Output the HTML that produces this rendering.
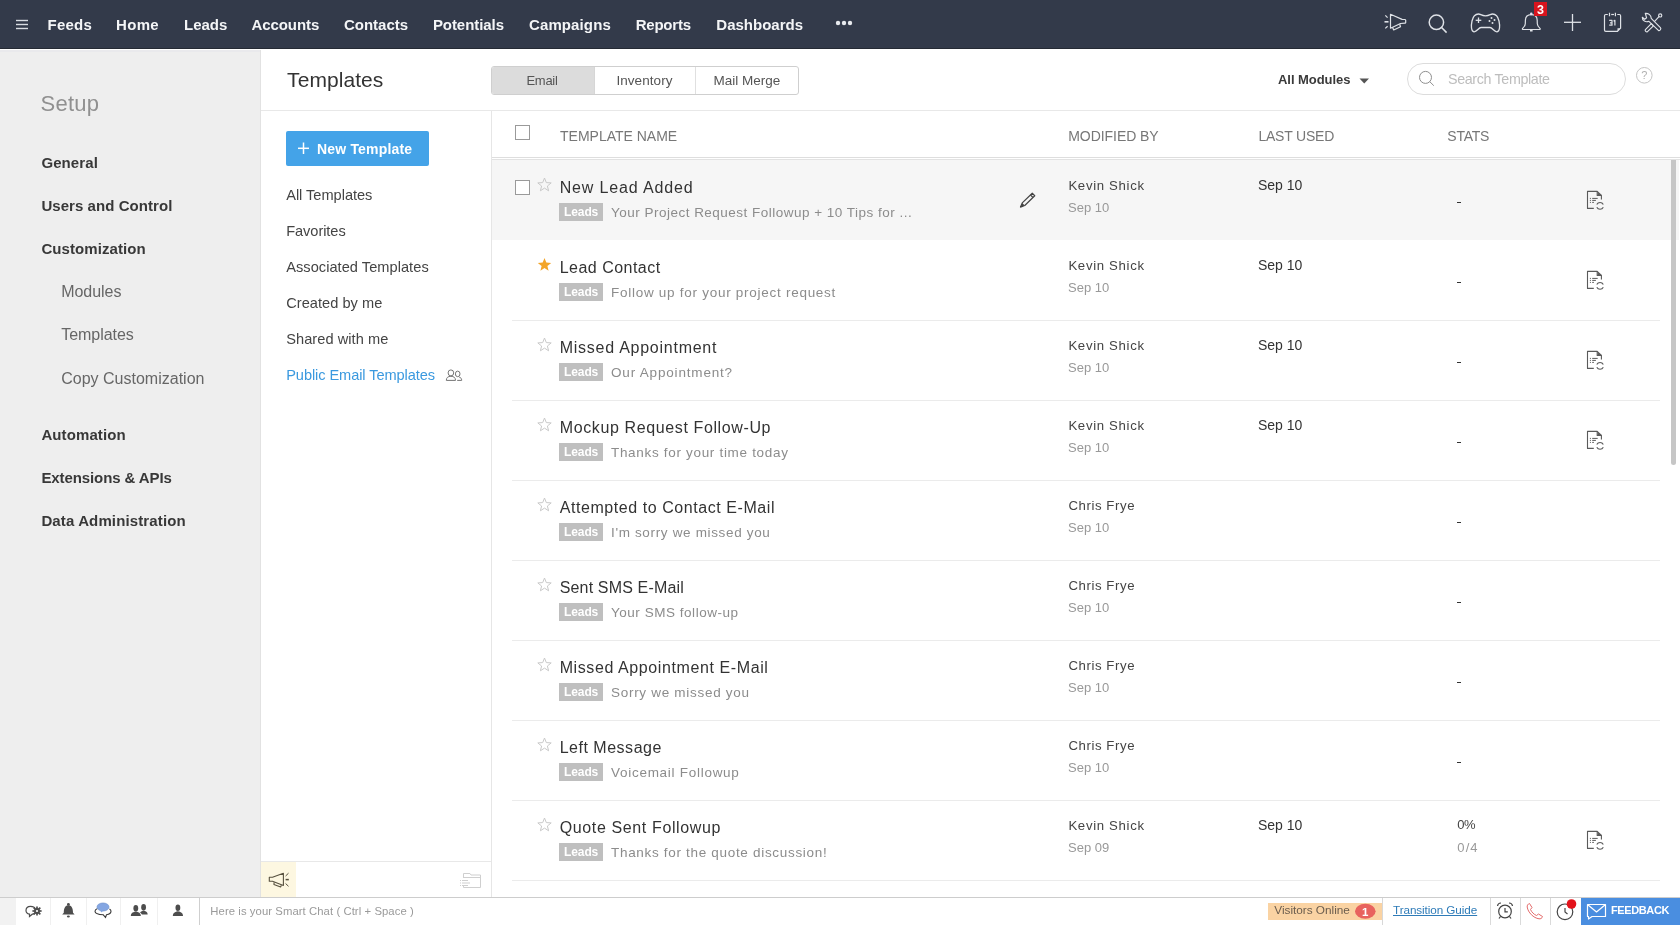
<!DOCTYPE html>
<html><head><meta charset="utf-8"><title>Templates</title>
<style>
html,body{margin:0;padding:0;width:1680px;height:925px;overflow:hidden;background:#fff;font-family:"Liberation Sans",sans-serif;}
.a{position:absolute;display:block;}
.t{position:absolute;white-space:nowrap;}
svg.a{overflow:visible}
#root{position:absolute;left:0;top:0;width:1680px;height:925px;overflow:hidden;will-change:transform;}
</style></head><body>
<div id="root">
<div class="a" style="left:0px;top:0px;width:1680px;height:48px;background:#333a4a"></div>
<div class="a" style="left:0px;top:48px;width:1680px;height:1px;background:#252a34"></div>
<svg class="a" style="left:15px;top:18px" width="14" height="13"><g stroke="#d9dce2" stroke-width="1.4"><line x1="1" y1="2.5" x2="13" y2="2.5"/><line x1="1" y1="6.5" x2="13" y2="6.5"/><line x1="1" y1="10.5" x2="13" y2="10.5"/></g></svg>
<div class="t" style="left:47.6px;top:15px;font-size:15px;line-height:19px;color:#f4f5f7;font-weight:bold;letter-spacing:0.2px">Feeds</div>
<div class="t" style="left:116px;top:15px;font-size:15px;line-height:19px;color:#f4f5f7;font-weight:bold;letter-spacing:0.333px">Home</div>
<div class="t" style="left:184px;top:15px;font-size:15px;line-height:19px;color:#f4f5f7;font-weight:bold;letter-spacing:-0.025px">Leads</div>
<div class="t" style="left:251.4px;top:15px;font-size:15px;line-height:19px;color:#f4f5f7;font-weight:bold;letter-spacing:-0.071px">Accounts</div>
<div class="t" style="left:344px;top:15px;font-size:15px;line-height:19px;color:#f4f5f7;font-weight:bold;letter-spacing:-0.014px">Contacts</div>
<div class="t" style="left:432.9px;top:15px;font-size:15px;line-height:19px;color:#f4f5f7;font-weight:bold;letter-spacing:-0.067px">Potentials</div>
<div class="t" style="left:529px;top:15px;font-size:15px;line-height:19px;color:#f4f5f7;font-weight:bold;letter-spacing:0.112px">Campaigns</div>
<div class="t" style="left:635.7px;top:15px;font-size:15px;line-height:19px;color:#f4f5f7;font-weight:bold;letter-spacing:-0.217px">Reports</div>
<div class="t" style="left:716.3px;top:15px;font-size:15px;line-height:19px;color:#f4f5f7;font-weight:bold;letter-spacing:0.011px">Dashboards</div>
<svg class="a" style="left:834px;top:19px" width="22" height="8"><g fill="#e8eaee"><circle cx="4" cy="4" r="2.2"/><circle cx="10" cy="4" r="2.2"/><circle cx="16" cy="4" r="2.2"/></g></svg>
<div class="a" style="left:0px;top:49px;width:260px;height:848px;background:#eeeeee"></div>
<div class="a" style="left:0px;top:49px;width:1680px;height:1px;background:#ffffff"></div>
<div class="a" style="left:0px;top:50px;width:260px;height:2px;background:#e9e9ec"></div>
<div class="a" style="left:260px;top:50px;width:1px;height:847px;background:#e2e2e2"></div>
<div class="t" style="left:40.6px;top:90px;font-size:22px;line-height:28px;color:#909090;letter-spacing:0.2px">Setup</div>
<div class="t" style="left:41.4px;top:153px;font-size:15px;line-height:19px;color:#383838;font-weight:bold;letter-spacing:0.1px">General</div>
<div class="t" style="left:41.4px;top:196px;font-size:15px;line-height:19px;color:#383838;font-weight:bold;letter-spacing:0.056px">Users and Control</div>
<div class="t" style="left:41.4px;top:239px;font-size:15px;line-height:19px;color:#383838;font-weight:bold;letter-spacing:0.083px">Customization</div>
<div class="t" style="left:41.4px;top:425px;font-size:15px;line-height:19px;color:#383838;font-weight:bold;letter-spacing:0.1px">Automation</div>
<div class="t" style="left:41.4px;top:468px;font-size:15px;line-height:19px;color:#383838;font-weight:bold;letter-spacing:-0.094px">Extensions &amp; APIs</div>
<div class="t" style="left:41.4px;top:511px;font-size:15px;line-height:19px;color:#383838;font-weight:bold;letter-spacing:0.128px">Data Administration</div>
<div class="t" style="left:61.25px;top:282px;font-size:16px;line-height:20px;color:#666666;letter-spacing:-0.058px">Modules</div>
<div class="t" style="left:61.25px;top:325px;font-size:16px;line-height:20px;color:#666666;letter-spacing:-0.044px">Templates</div>
<div class="t" style="left:61.25px;top:369px;font-size:16px;line-height:20px;color:#666666;letter-spacing:0.003px">Copy Customization</div>
<div class="a" style="left:261px;top:50px;width:230px;height:847px;background:#ffffff"></div>
<div class="a" style="left:491px;top:110px;width:1px;height:787px;background:#e6e6e6"></div>
<div class="t" style="left:287.1px;top:66px;font-size:21px;line-height:27px;color:#333333;letter-spacing:0.062px">Templates</div>
<div class="a" style="left:261px;top:110px;width:1419px;height:1px;background:#e8e8e8"></div>
<div class="a" style="left:286px;top:131px;width:143px;height:35px;background:#44a3e8;border-radius:2px"></div>
<svg class="a" style="left:297px;top:142px" width="13" height="13"><g stroke="#fff" stroke-width="1.5"><line x1="6.5" y1="0.5" x2="6.5" y2="12"/><line x1="1" y1="6.3" x2="12" y2="6.3"/></g></svg>
<div class="t" style="left:317px;top:140px;font-size:14px;line-height:18px;color:#ffffff;font-weight:bold;letter-spacing:0.182px">New Template</div>
<div class="t" style="left:286.2px;top:186px;font-size:14.6px;line-height:19px;color:#444444;letter-spacing:-0.025px">All Templates</div>
<div class="t" style="left:286.2px;top:222px;font-size:14.6px;line-height:19px;color:#444444;letter-spacing:-0.062px">Favorites</div>
<div class="t" style="left:286.2px;top:258px;font-size:14.6px;line-height:19px;color:#444444;letter-spacing:0.042px">Associated Templates</div>
<div class="t" style="left:286.2px;top:294px;font-size:14.6px;line-height:19px;color:#444444;letter-spacing:0.033px">Created by me</div>
<div class="t" style="left:286.2px;top:330px;font-size:14.6px;line-height:19px;color:#444444;letter-spacing:0.054px">Shared with me</div>
<div class="t" style="left:286.2px;top:366px;font-size:14.6px;line-height:19px;color:#3a99df;letter-spacing:-0.081px">Public Email Templates</div>
<svg class="a" style="left:445px;top:369px" width="18" height="14"><g fill="none" stroke="#757575" stroke-width="1" stroke-linejoin="round"><ellipse cx="5.9" cy="3.9" rx="2.8" ry="3"/><path d="M1.3,11.4 C1.3,8.6 3,7.3 5.9,7.3 C8.8,7.3 10.5,8.6 10.5,11.4 Z"/><ellipse cx="12.7" cy="4.9" rx="2.3" ry="2.8"/><path d="M12.2,11.4 L16.7,11.4 C16.7,9.6 15.8,8.5 14.2,8.1"/></g></svg>
<div class="a" style="left:261px;top:861px;width:230px;height:1px;background:#e8e8e8"></div>
<div class="a" style="left:261px;top:862px;width:35px;height:35px;background:#fdf7e1"></div>
<svg class="a" style="left:268px;top:872px" width="23" height="17"><g fill="none" stroke="#57503f" stroke-width="1.1" stroke-linejoin="round"><path d="M1.3,5.2 L1.3,9.2 L4.5,9.2 L15.4,13.4 L15.4,1.3 L4.5,5.2 Z"/><path d="M6.2,10.3 L5.9,12.4 L12.6,14.9 L13.4,13.3"/></g><g stroke="#57503f" stroke-width="1"><line x1="17.6" y1="4" x2="20.5" y2="1.2"/><line x1="17.6" y1="7.6" x2="20.8" y2="7.6" stroke-width="1.5"/><line x1="17.6" y1="11.5" x2="20.5" y2="14.3"/></g></svg>
<svg class="a" style="left:459px;top:872px" width="24" height="17"><g fill="none" stroke="#cfcfcf" stroke-width="1"><path d="M4.5,5.5 L4.5,1.5 L11,1.5 L12,3 L21.5,3 L21.5,15.5 L4.5,15.5 L4.5,13"/><line x1="4" y1="5.5" x2="21.5" y2="5.5"/></g><g stroke="#cfcfcf" stroke-width="1"><line x1="1" y1="8.5" x2="2" y2="8.5"/><line x1="3" y1="8.5" x2="9" y2="8.5"/><line x1="1" y1="11" x2="2" y2="11"/><line x1="3" y1="11" x2="11" y2="11"/><line x1="1" y1="13.5" x2="2" y2="13.5"/><line x1="3" y1="13.5" x2="9" y2="13.5"/></g></svg>
<svg class="a" style="left:1383px;top:12px" width="26" height="20"><g fill="none" stroke="#dfe2e7" stroke-width="1.2" stroke-linejoin="round"><path d="M7.5,2.3 L19.1,7.4 L22,7.5 Q22.7,7.6 22.7,8.3 L22.7,10.5 Q22.7,11.2 22,11.2 L17.5,11.5 L7.5,16.2 Z"/><path d="M9.5,15.3 L10.7,18 L17.5,14.8 L16.7,12.3"/></g><g stroke="#dfe2e7" stroke-width="1.2"><line x1="2.3" y1="3.3" x2="4.6" y2="5.6"/><line x1="1.5" y1="9.8" x2="5.5" y2="9.8" stroke-width="1.6"/><line x1="2.3" y1="16.4" x2="4.6" y2="14.2"/></g></svg>
<svg class="a" style="left:1427px;top:13px" width="22" height="22"><g fill="none" stroke="#dfe2e7" stroke-width="1.5"><circle cx="9.4" cy="9.3" r="7.2"/><line x1="14.6" y1="14.5" x2="19.6" y2="19.6"/></g></svg>
<svg class="a" style="left:1470px;top:12px" width="32" height="22"><g fill="none" stroke="#dfe2e7" stroke-width="1.3" stroke-linejoin="round"><path d="M8.5,2 C5,2 3,4.5 2,9 C1,13.5 1,19.5 4,19.8 C7,20 8.5,15.5 11,15.5 L20,15.5 C22.5,15.5 24,20 27,19.8 C30,19.5 30,13.5 29,9 C28,4.5 26,2 22.5,2 C20.5,2 19.5,3.8 15.5,3.8 C11.5,3.8 10.5,2 8.5,2 Z"/><line x1="8.5" y1="5.5" x2="8.5" y2="11"/><line x1="5.7" y1="8.3" x2="11.3" y2="8.3"/></g><g fill="#dfe2e7"><circle cx="21.5" cy="6" r="1"/><circle cx="24.5" cy="8" r="1"/><circle cx="19.5" cy="9" r="1"/><circle cx="22.5" cy="11" r="1"/></g></svg>
<svg class="a" style="left:1520px;top:11px" width="24" height="22"><g fill="none" stroke="#dfe2e7" stroke-width="1.2" stroke-linejoin="round"><path d="M11.3,3.6 C7.8,3.6 5.5,5.8 5.4,9.2 L5.3,12.8 C5.2,15 3.8,16.4 2.6,17.4 Q2,18.5 3.2,18.5 L19.4,18.5 Q20.6,18.5 20,17.4 C18.8,16.4 17.4,15 17.3,12.8 L17.2,9.2 C17.1,5.8 14.8,3.6 11.3,3.6 Z"/></g><circle cx="11.3" cy="2.9" r="1.3" fill="#e8dff0"/><rect x="10" y="18.5" width="2.6" height="2" fill="#dfe2e7"/></svg>
<div class="a" style="left:1534px;top:2px;width:13px;height:14px;background:#d8141d"></div>
<div class="t" style="left:1537px;top:2px;font-size:12.5px;line-height:16px;color:#ffffff;font-weight:bold">3</div>
<svg class="a" style="left:1563px;top:13px" width="20" height="20"><g stroke="#dfe2e7" stroke-width="1.3"><line x1="9.5" y1="1" x2="9.5" y2="18"/><line x1="1" y1="9.3" x2="18" y2="9.3"/></g></svg>
<svg class="a" style="left:1598px;top:8px" width="30" height="28"><g fill="none" stroke="#dfe2e7" stroke-width="1.2" stroke-linejoin="round"><path d="M9.8,6.5 L7.8,6.5 Q6.5,6.5 6.5,7.8 L6.5,22 Q6.5,23.3 7.8,23.3 L19.5,23.3 L22.6,20.2 L22.6,7.8 Q22.6,6.5 21.3,6.5 L19.3,6.5"/><path d="M13.2,6.5 L16,6.5"/><path d="M11.5,4.8 L11.5,8.3 M17.4,4.8 L17.4,8.3"/><path d="M11.2,12.4 L14,12.4 L14,17.2 L11.2,17.2 M12,14.8 L14,14.8"/><path d="M15.6,13.1 L16.9,12.4 L16.9,17.4"/></g><path d="M19.5,23.3 L19.5,20.2 L22.6,20.2 Z" fill="#dfe2e7"/></svg>
<svg class="a" style="left:1636px;top:8px" width="30" height="28"><g fill="none" stroke="#dfe2e7" stroke-width="1.15" stroke-linejoin="round" stroke-linecap="round"><path d="M9.3,5.4 C12.6,5.2 15.2,7.2 15.2,10.3 L24.4,19.6 C25.6,20.8 23.9,23.2 22.4,22.4 L12.9,13.3 C9.8,14.6 6.1,12.8 6.3,9.3 L8.7,11.3 L10.6,9.8 Z"/><circle cx="24.2" cy="7.4" r="1.6"/><line x1="23" y1="8.7" x2="18.6" y2="13.3"/><path d="M15.3,15.7 L17.4,17.8 L11.5,23.6 C10.5,24.6 8.4,22.6 9.4,21.6 Z"/></g></svg>
<div class="a" style="left:491px;top:66px;width:308px;height:29px;background:#ffffff;border:1px solid #cfcfcf;border-radius:3px;box-sizing:border-box"></div>
<div class="a" style="left:492px;top:67px;width:102px;height:27px;background:#dcdcdc;border-radius:2px 0 0 2px"></div>
<div class="a" style="left:594px;top:67px;width:1px;height:27px;background:#d6d6d6"></div>
<div class="a" style="left:695px;top:67px;width:1px;height:27px;background:#e0e0e0"></div>
<div class="t" style="left:526.5px;top:72px;font-size:13px;line-height:17px;color:#555555;letter-spacing:-0.3px">Email</div>
<div class="t" style="left:616.4px;top:72px;font-size:13.5px;line-height:17px;color:#555555;letter-spacing:0.075px">Inventory</div>
<div class="t" style="left:713.6px;top:72px;font-size:13.5px;line-height:17px;color:#555555">Mail Merge</div>
<div class="t" style="left:1278px;top:71px;font-size:13px;line-height:17px;color:#3a3a3a;font-weight:bold;letter-spacing:-0.05px">All Modules</div>
<svg class="a" style="left:1359px;top:78px" width="11" height="6"><path d="M0.5,0.5 L10,0.5 L5.25,5.5 Z" fill="#555"/></svg>
<div class="a" style="left:1407px;top:63px;width:219px;height:32px;background:#ffffff;border:1px solid #dcdcdc;border-radius:16px;box-sizing:border-box"></div>
<svg class="a" style="left:1417px;top:70px" width="20" height="18"><g fill="none" stroke="#8f8f8f" stroke-width="1"><circle cx="8.5" cy="7.4" r="6"/><line x1="12.7" y1="11.6" x2="16.8" y2="15.7"/></g></svg>
<div class="t" style="left:1448px;top:70px;font-size:14.3px;line-height:18px;color:#bdbdbd;letter-spacing:-0.357px">Search Template</div>
<svg class="a" style="left:1635px;top:66px" width="19" height="19"><circle cx="9.3" cy="9.3" r="7.8" fill="none" stroke="#c4c4c4" stroke-width="1"/><text x="9.3" y="13.3" font-family="Liberation Sans" font-size="11" fill="#b0b0b0" text-anchor="middle">?</text></svg>
<div class="a" style="left:515px;top:125px;width:15px;height:15px;background:#ffffff;border:1px solid #9a9a9a;box-sizing:border-box"></div>
<div class="t" style="left:560px;top:127px;font-size:14px;line-height:18px;color:#777777">TEMPLATE NAME</div>
<div class="t" style="left:1068.2px;top:127px;font-size:14px;line-height:18px;color:#777777;letter-spacing:-0.05px">MODIFIED BY</div>
<div class="t" style="left:1258.4px;top:127px;font-size:14px;line-height:18px;color:#777777;letter-spacing:-0.2px">LAST USED</div>
<div class="t" style="left:1447.3px;top:127px;font-size:14px;line-height:18px;color:#777777;letter-spacing:-0.25px">STATS</div>
<div class="a" style="left:492px;top:157px;width:1188px;height:1px;background:#dedede"></div>
<div class="a" style="left:492px;top:159px;width:1188px;height:1px;background:#e2e2e2"></div>
<div class="a" style="left:492px;top:160px;width:1187px;height:80px;background:#f6f6f6"></div>
<div class="a" style="left:515px;top:180px;width:15px;height:15px;background:#ffffff;border:1px solid #9a9a9a;box-sizing:border-box"></div>
<svg class="a" style="left:537px;top:177px" width="15" height="15"><path d="M7.5,1 L9.3,5.6 L14.2,5.9 L10.4,9 L11.6,13.8 L7.5,11.1 L3.4,13.8 L4.6,9 L0.8,5.9 L5.7,5.6 Z" fill="none" stroke="#c9c9c9" stroke-width="1"/></svg>
<div class="t" style="left:559.7px;top:178px;font-size:16px;line-height:20px;color:#333333;letter-spacing:0.846px">New Lead Added</div>
<div class="a" style="left:559px;top:203px;width:44px;height:18px;background:#bfbfbf"></div>
<div class="t" style="left:564px;top:205px;font-size:12px;line-height:15px;color:#ffffff;font-weight:bold;letter-spacing:-0.1px">Leads</div>
<div class="t" style="left:611px;top:204px;font-size:13.5px;line-height:17px;color:#8c8c8c;letter-spacing:0.487px">Your Project Request Followup + 10 Tips for ...</div>
<div class="t" style="left:1068.4px;top:177px;font-size:13.2px;line-height:17px;color:#444444;letter-spacing:0.68px">Kevin Shick</div>
<div class="t" style="left:1068px;top:199px;font-size:13px;line-height:17px;color:#999999">Sep 10</div>
<div class="t" style="left:1258px;top:176px;font-size:14px;line-height:18px;color:#333333">Sep 10</div>
<div class="a" style="left:1457px;top:202px;width:4px;height:1px;background:#333333"></div>
<svg class="a" style="left:1582px;top:187px" width="28" height="26"><g fill="none" stroke="#5a5a5a" stroke-width="1.1" stroke-linejoin="round"><path d="M11.8,21.4 L5.5,21.4 L5.5,4.4 L15.2,4.4 L19.4,8.4 L19.4,12.6"/><path d="M15.2,4.4 L15.2,8.4 L19.4,8.4"/><path d="M14.8,17.6 A3.6,3.6 0 0 1 21.3,17.6"/><path d="M21.3,20.2 A3.6,3.6 0 0 1 14.8,20.2"/></g><path d="M15.6,5 L18.6,8 L15.6,8 Z" fill="#5a5a5a"/><g stroke="#5a5a5a" stroke-width="1"><line x1="7.9" y1="11.4" x2="8.9" y2="11.4"/><line x1="10.2" y1="11.4" x2="15.7" y2="11.4"/><line x1="7.9" y1="13.4" x2="8.9" y2="13.4"/><line x1="10.2" y1="13.4" x2="13.9" y2="13.4"/><line x1="7.9" y1="15.4" x2="8.9" y2="15.4"/><line x1="10.2" y1="15.4" x2="11.9" y2="15.4"/></g></svg>
<svg class="a" style="left:537px;top:257px" width="15" height="15"><path d="M7.5,1 L9.3,5.6 L14.2,5.9 L10.4,9 L11.6,13.8 L7.5,11.1 L3.4,13.8 L4.6,9 L0.8,5.9 L5.7,5.6 Z" fill="#f3a528"/></svg>
<div class="t" style="left:559.7px;top:258px;font-size:16px;line-height:20px;color:#333333;letter-spacing:0.482px">Lead Contact</div>
<div class="a" style="left:559px;top:283px;width:44px;height:18px;background:#bfbfbf"></div>
<div class="t" style="left:564px;top:285px;font-size:12px;line-height:15px;color:#ffffff;font-weight:bold;letter-spacing:-0.1px">Leads</div>
<div class="t" style="left:611px;top:284px;font-size:13.5px;line-height:17px;color:#8c8c8c;letter-spacing:0.727px">Follow up for your project request</div>
<div class="t" style="left:1068.4px;top:257px;font-size:13.2px;line-height:17px;color:#444444;letter-spacing:0.68px">Kevin Shick</div>
<div class="t" style="left:1068px;top:279px;font-size:13px;line-height:17px;color:#999999">Sep 10</div>
<div class="t" style="left:1258px;top:256px;font-size:14px;line-height:18px;color:#333333">Sep 10</div>
<div class="a" style="left:1457px;top:282px;width:4px;height:1px;background:#333333"></div>
<svg class="a" style="left:1582px;top:267px" width="28" height="26"><g fill="none" stroke="#5a5a5a" stroke-width="1.1" stroke-linejoin="round"><path d="M11.8,21.4 L5.5,21.4 L5.5,4.4 L15.2,4.4 L19.4,8.4 L19.4,12.6"/><path d="M15.2,4.4 L15.2,8.4 L19.4,8.4"/><path d="M14.8,17.6 A3.6,3.6 0 0 1 21.3,17.6"/><path d="M21.3,20.2 A3.6,3.6 0 0 1 14.8,20.2"/></g><path d="M15.6,5 L18.6,8 L15.6,8 Z" fill="#5a5a5a"/><g stroke="#5a5a5a" stroke-width="1"><line x1="7.9" y1="11.4" x2="8.9" y2="11.4"/><line x1="10.2" y1="11.4" x2="15.7" y2="11.4"/><line x1="7.9" y1="13.4" x2="8.9" y2="13.4"/><line x1="10.2" y1="13.4" x2="13.9" y2="13.4"/><line x1="7.9" y1="15.4" x2="8.9" y2="15.4"/><line x1="10.2" y1="15.4" x2="11.9" y2="15.4"/></g></svg>
<div class="a" style="left:512px;top:320px;width:1148px;height:1px;background:#ebebeb"></div>
<svg class="a" style="left:537px;top:337px" width="15" height="15"><path d="M7.5,1 L9.3,5.6 L14.2,5.9 L10.4,9 L11.6,13.8 L7.5,11.1 L3.4,13.8 L4.6,9 L0.8,5.9 L5.7,5.6 Z" fill="none" stroke="#c9c9c9" stroke-width="1"/></svg>
<div class="t" style="left:559.7px;top:338px;font-size:16px;line-height:20px;color:#333333;letter-spacing:0.747px">Missed Appointment</div>
<div class="a" style="left:559px;top:363px;width:44px;height:18px;background:#bfbfbf"></div>
<div class="t" style="left:564px;top:365px;font-size:12px;line-height:15px;color:#ffffff;font-weight:bold;letter-spacing:-0.1px">Leads</div>
<div class="t" style="left:611px;top:364px;font-size:13.5px;line-height:17px;color:#8c8c8c;letter-spacing:0.82px">Our Appointment?</div>
<div class="t" style="left:1068.4px;top:337px;font-size:13.2px;line-height:17px;color:#444444;letter-spacing:0.68px">Kevin Shick</div>
<div class="t" style="left:1068px;top:359px;font-size:13px;line-height:17px;color:#999999">Sep 10</div>
<div class="t" style="left:1258px;top:336px;font-size:14px;line-height:18px;color:#333333">Sep 10</div>
<div class="a" style="left:1457px;top:362px;width:4px;height:1px;background:#333333"></div>
<svg class="a" style="left:1582px;top:347px" width="28" height="26"><g fill="none" stroke="#5a5a5a" stroke-width="1.1" stroke-linejoin="round"><path d="M11.8,21.4 L5.5,21.4 L5.5,4.4 L15.2,4.4 L19.4,8.4 L19.4,12.6"/><path d="M15.2,4.4 L15.2,8.4 L19.4,8.4"/><path d="M14.8,17.6 A3.6,3.6 0 0 1 21.3,17.6"/><path d="M21.3,20.2 A3.6,3.6 0 0 1 14.8,20.2"/></g><path d="M15.6,5 L18.6,8 L15.6,8 Z" fill="#5a5a5a"/><g stroke="#5a5a5a" stroke-width="1"><line x1="7.9" y1="11.4" x2="8.9" y2="11.4"/><line x1="10.2" y1="11.4" x2="15.7" y2="11.4"/><line x1="7.9" y1="13.4" x2="8.9" y2="13.4"/><line x1="10.2" y1="13.4" x2="13.9" y2="13.4"/><line x1="7.9" y1="15.4" x2="8.9" y2="15.4"/><line x1="10.2" y1="15.4" x2="11.9" y2="15.4"/></g></svg>
<div class="a" style="left:512px;top:400px;width:1148px;height:1px;background:#ebebeb"></div>
<svg class="a" style="left:537px;top:417px" width="15" height="15"><path d="M7.5,1 L9.3,5.6 L14.2,5.9 L10.4,9 L11.6,13.8 L7.5,11.1 L3.4,13.8 L4.6,9 L0.8,5.9 L5.7,5.6 Z" fill="none" stroke="#c9c9c9" stroke-width="1"/></svg>
<div class="t" style="left:559.7px;top:418px;font-size:16px;line-height:20px;color:#333333;letter-spacing:0.622px">Mockup Request Follow-Up</div>
<div class="a" style="left:559px;top:443px;width:44px;height:18px;background:#bfbfbf"></div>
<div class="t" style="left:564px;top:445px;font-size:12px;line-height:15px;color:#ffffff;font-weight:bold;letter-spacing:-0.1px">Leads</div>
<div class="t" style="left:611px;top:444px;font-size:13.5px;line-height:17px;color:#8c8c8c;letter-spacing:0.684px">Thanks for your time today</div>
<div class="t" style="left:1068.4px;top:417px;font-size:13.2px;line-height:17px;color:#444444;letter-spacing:0.68px">Kevin Shick</div>
<div class="t" style="left:1068px;top:439px;font-size:13px;line-height:17px;color:#999999">Sep 10</div>
<div class="t" style="left:1258px;top:416px;font-size:14px;line-height:18px;color:#333333">Sep 10</div>
<div class="a" style="left:1457px;top:442px;width:4px;height:1px;background:#333333"></div>
<svg class="a" style="left:1582px;top:427px" width="28" height="26"><g fill="none" stroke="#5a5a5a" stroke-width="1.1" stroke-linejoin="round"><path d="M11.8,21.4 L5.5,21.4 L5.5,4.4 L15.2,4.4 L19.4,8.4 L19.4,12.6"/><path d="M15.2,4.4 L15.2,8.4 L19.4,8.4"/><path d="M14.8,17.6 A3.6,3.6 0 0 1 21.3,17.6"/><path d="M21.3,20.2 A3.6,3.6 0 0 1 14.8,20.2"/></g><path d="M15.6,5 L18.6,8 L15.6,8 Z" fill="#5a5a5a"/><g stroke="#5a5a5a" stroke-width="1"><line x1="7.9" y1="11.4" x2="8.9" y2="11.4"/><line x1="10.2" y1="11.4" x2="15.7" y2="11.4"/><line x1="7.9" y1="13.4" x2="8.9" y2="13.4"/><line x1="10.2" y1="13.4" x2="13.9" y2="13.4"/><line x1="7.9" y1="15.4" x2="8.9" y2="15.4"/><line x1="10.2" y1="15.4" x2="11.9" y2="15.4"/></g></svg>
<div class="a" style="left:512px;top:480px;width:1148px;height:1px;background:#ebebeb"></div>
<svg class="a" style="left:537px;top:497px" width="15" height="15"><path d="M7.5,1 L9.3,5.6 L14.2,5.9 L10.4,9 L11.6,13.8 L7.5,11.1 L3.4,13.8 L4.6,9 L0.8,5.9 L5.7,5.6 Z" fill="none" stroke="#c9c9c9" stroke-width="1"/></svg>
<div class="t" style="left:559.7px;top:498px;font-size:16px;line-height:20px;color:#333333;letter-spacing:0.565px">Attempted to Contact E-Mail</div>
<div class="a" style="left:559px;top:523px;width:44px;height:18px;background:#bfbfbf"></div>
<div class="t" style="left:564px;top:525px;font-size:12px;line-height:15px;color:#ffffff;font-weight:bold;letter-spacing:-0.1px">Leads</div>
<div class="t" style="left:611px;top:524px;font-size:13.5px;line-height:17px;color:#8c8c8c;letter-spacing:0.659px">I'm sorry we missed you</div>
<div class="t" style="left:1068.4px;top:497px;font-size:13.2px;line-height:17px;color:#444444;letter-spacing:0.589px">Chris Frye</div>
<div class="t" style="left:1068px;top:519px;font-size:13px;line-height:17px;color:#999999">Sep 10</div>
<div class="a" style="left:1457px;top:522px;width:4px;height:1px;background:#333333"></div>
<div class="a" style="left:512px;top:560px;width:1148px;height:1px;background:#ebebeb"></div>
<svg class="a" style="left:537px;top:577px" width="15" height="15"><path d="M7.5,1 L9.3,5.6 L14.2,5.9 L10.4,9 L11.6,13.8 L7.5,11.1 L3.4,13.8 L4.6,9 L0.8,5.9 L5.7,5.6 Z" fill="none" stroke="#c9c9c9" stroke-width="1"/></svg>
<div class="t" style="left:559.7px;top:578px;font-size:16px;line-height:20px;color:#333333;letter-spacing:0.157px">Sent SMS E-Mail</div>
<div class="a" style="left:559px;top:603px;width:44px;height:18px;background:#bfbfbf"></div>
<div class="t" style="left:564px;top:605px;font-size:12px;line-height:15px;color:#ffffff;font-weight:bold;letter-spacing:-0.1px">Leads</div>
<div class="t" style="left:611px;top:604px;font-size:13.5px;line-height:17px;color:#8c8c8c;letter-spacing:0.529px">Your SMS follow-up</div>
<div class="t" style="left:1068.4px;top:577px;font-size:13.2px;line-height:17px;color:#444444;letter-spacing:0.589px">Chris Frye</div>
<div class="t" style="left:1068px;top:599px;font-size:13px;line-height:17px;color:#999999">Sep 10</div>
<div class="a" style="left:1457px;top:602px;width:4px;height:1px;background:#333333"></div>
<div class="a" style="left:512px;top:640px;width:1148px;height:1px;background:#ebebeb"></div>
<svg class="a" style="left:537px;top:657px" width="15" height="15"><path d="M7.5,1 L9.3,5.6 L14.2,5.9 L10.4,9 L11.6,13.8 L7.5,11.1 L3.4,13.8 L4.6,9 L0.8,5.9 L5.7,5.6 Z" fill="none" stroke="#c9c9c9" stroke-width="1"/></svg>
<div class="t" style="left:559.7px;top:658px;font-size:16px;line-height:20px;color:#333333;letter-spacing:0.596px">Missed Appointment E-Mail</div>
<div class="a" style="left:559px;top:683px;width:44px;height:18px;background:#bfbfbf"></div>
<div class="t" style="left:564px;top:685px;font-size:12px;line-height:15px;color:#ffffff;font-weight:bold;letter-spacing:-0.1px">Leads</div>
<div class="t" style="left:611px;top:684px;font-size:13.5px;line-height:17px;color:#8c8c8c;letter-spacing:0.706px">Sorry we missed you</div>
<div class="t" style="left:1068.4px;top:657px;font-size:13.2px;line-height:17px;color:#444444;letter-spacing:0.589px">Chris Frye</div>
<div class="t" style="left:1068px;top:679px;font-size:13px;line-height:17px;color:#999999">Sep 10</div>
<div class="a" style="left:1457px;top:682px;width:4px;height:1px;background:#333333"></div>
<div class="a" style="left:512px;top:720px;width:1148px;height:1px;background:#ebebeb"></div>
<svg class="a" style="left:537px;top:737px" width="15" height="15"><path d="M7.5,1 L9.3,5.6 L14.2,5.9 L10.4,9 L11.6,13.8 L7.5,11.1 L3.4,13.8 L4.6,9 L0.8,5.9 L5.7,5.6 Z" fill="none" stroke="#c9c9c9" stroke-width="1"/></svg>
<div class="t" style="left:559.7px;top:738px;font-size:16px;line-height:20px;color:#333333;letter-spacing:0.509px">Left Message</div>
<div class="a" style="left:559px;top:763px;width:44px;height:18px;background:#bfbfbf"></div>
<div class="t" style="left:564px;top:765px;font-size:12px;line-height:15px;color:#ffffff;font-weight:bold;letter-spacing:-0.1px">Leads</div>
<div class="t" style="left:611px;top:764px;font-size:13.5px;line-height:17px;color:#8c8c8c;letter-spacing:0.724px">Voicemail Followup</div>
<div class="t" style="left:1068.4px;top:737px;font-size:13.2px;line-height:17px;color:#444444;letter-spacing:0.589px">Chris Frye</div>
<div class="t" style="left:1068px;top:759px;font-size:13px;line-height:17px;color:#999999">Sep 10</div>
<div class="a" style="left:1457px;top:762px;width:4px;height:1px;background:#333333"></div>
<div class="a" style="left:512px;top:800px;width:1148px;height:1px;background:#ebebeb"></div>
<svg class="a" style="left:537px;top:817px" width="15" height="15"><path d="M7.5,1 L9.3,5.6 L14.2,5.9 L10.4,9 L11.6,13.8 L7.5,11.1 L3.4,13.8 L4.6,9 L0.8,5.9 L5.7,5.6 Z" fill="none" stroke="#c9c9c9" stroke-width="1"/></svg>
<div class="t" style="left:559.7px;top:818px;font-size:16px;line-height:20px;color:#333333;letter-spacing:0.628px">Quote Sent Followup</div>
<div class="a" style="left:559px;top:843px;width:44px;height:18px;background:#bfbfbf"></div>
<div class="t" style="left:564px;top:845px;font-size:12px;line-height:15px;color:#ffffff;font-weight:bold;letter-spacing:-0.1px">Leads</div>
<div class="t" style="left:611px;top:844px;font-size:13.5px;line-height:17px;color:#8c8c8c;letter-spacing:0.687px">Thanks for the quote discussion!</div>
<div class="t" style="left:1068.4px;top:817px;font-size:13.2px;line-height:17px;color:#444444;letter-spacing:0.68px">Kevin Shick</div>
<div class="t" style="left:1068px;top:839px;font-size:13px;line-height:17px;color:#999999">Sep 09</div>
<div class="t" style="left:1258px;top:816px;font-size:14px;line-height:18px;color:#333333">Sep 10</div>
<div class="t" style="left:1457.3px;top:816px;font-size:13px;line-height:17px;color:#444444;letter-spacing:-0.6px">0%</div>
<div class="t" style="left:1457.3px;top:839px;font-size:13px;line-height:17px;color:#999999;letter-spacing:1.1px">0/4</div>
<svg class="a" style="left:1582px;top:827px" width="28" height="26"><g fill="none" stroke="#5a5a5a" stroke-width="1.1" stroke-linejoin="round"><path d="M11.8,21.4 L5.5,21.4 L5.5,4.4 L15.2,4.4 L19.4,8.4 L19.4,12.6"/><path d="M15.2,4.4 L15.2,8.4 L19.4,8.4"/><path d="M14.8,17.6 A3.6,3.6 0 0 1 21.3,17.6"/><path d="M21.3,20.2 A3.6,3.6 0 0 1 14.8,20.2"/></g><path d="M15.6,5 L18.6,8 L15.6,8 Z" fill="#5a5a5a"/><g stroke="#5a5a5a" stroke-width="1"><line x1="7.9" y1="11.4" x2="8.9" y2="11.4"/><line x1="10.2" y1="11.4" x2="15.7" y2="11.4"/><line x1="7.9" y1="13.4" x2="8.9" y2="13.4"/><line x1="10.2" y1="13.4" x2="13.9" y2="13.4"/><line x1="7.9" y1="15.4" x2="8.9" y2="15.4"/><line x1="10.2" y1="15.4" x2="11.9" y2="15.4"/></g></svg>
<div class="a" style="left:512px;top:880px;width:1148px;height:1px;background:#ebebeb"></div>
<svg class="a" style="left:1014px;top:186px" width="28" height="26"><g fill="none" stroke="#444" stroke-width="1.2" stroke-linejoin="round"><path d="M6.5,21.1 L8.25,16.91 L18.25,7.21 L20.75,9.79 L10.75,19.49 Z"/><line x1="16.45" y1="8.95" x2="18.95" y2="11.53"/></g><path d="M6.5,21.1 L8.25,16.91 L10.75,19.49 Z" fill="#444"/></svg>
<div class="a" style="left:1671px;top:160px;width:5px;height:305px;background:#c6c6c6;border-radius:0 0 3px 3px"></div>
<div class="a" style="left:0px;top:897px;width:1680px;height:1px;background:#cdcdcd"></div>
<div class="a" style="left:0px;top:898px;width:1680px;height:27px;background:#ffffff"></div>
<div class="a" style="left:0px;top:898px;width:16px;height:27px;background:#f2f2f2"></div>
<div class="a" style="left:50px;top:898px;width:1px;height:27px;background:#f0f0f0"></div>
<div class="a" style="left:86px;top:898px;width:1px;height:27px;background:#f0f0f0"></div>
<div class="a" style="left:120px;top:898px;width:1px;height:27px;background:#f0f0f0"></div>
<div class="a" style="left:157px;top:898px;width:1px;height:27px;background:#f0f0f0"></div>
<div class="a" style="left:199px;top:898px;width:1px;height:27px;background:#cfcfcf"></div>
<svg class="a" style="left:0px;top:898px" width="200" height="27">
<g fill="none" stroke="#4d4d4d" stroke-width="1.2"><path d="M35,10.5 C34.5,8.6 32.6,8.3 30.5,8.3 C27.8,8.3 26,9.9 26,12.4 C26,14.5 27.5,15.7 29.5,16.1 L29.5,18.4 L32.3,16.2 C33.5,16.1 34.5,15.6 35,15"/></g>
<g transform="translate(37,13)"><g stroke="#4d4d4d" stroke-width="1.7"><line x1="0" y1="-4.6" x2="0" y2="4.6"/><line x1="-4.6" y1="0" x2="4.6" y2="0"/><line x1="-3.3" y1="-3.3" x2="3.3" y2="3.3"/><line x1="-3.3" y1="3.3" x2="3.3" y2="-3.3"/></g><circle r="2.9" fill="#4d4d4d"/><circle r="1.1" fill="#fff"/></g>
<circle cx="68.4" cy="6.3" r="1.4" fill="#4d4d4d"/>
<path d="M62.2,16.6 L63.8,14.8 C63.8,9.8 65.5,7.2 68.4,7.2 C71.3,7.2 73,9.8 73,14.8 L74.6,16.6 Z" fill="#4d4d4d"/>
<ellipse cx="68.4" cy="18.6" rx="1.5" ry="1" fill="#4d4d4d"/>
<path d="M97.5,10.5 C95.8,11.2 95,12.2 95,13.3 C95,15.3 98.5,16.6 103.3,16.8 L105.5,19.5 L106.5,16.7 C109.5,16.3 111,15 111,13.3 C111,12.3 110.4,11.5 109.5,11" fill="none" stroke="#3a3a3a" stroke-width="1.1"/>
<ellipse cx="103" cy="9" rx="6" ry="4" fill="#84a6e2" stroke="#6f92cf" stroke-width="0.7"/>
<path d="M100.3,12.5 L101.3,14.6 L103.2,12.8 Z" fill="#84a6e2"/>
<g fill="#4d4d4d"><ellipse cx="143.6" cy="9.3" rx="2.4" ry="3.3"/><path d="M139.5,16.6 C139.8,14.5 140.5,13.4 143.6,12.6 C146.7,13.4 147.4,14.5 147.7,16.6 Z"/></g>
<g fill="#fff"><ellipse cx="135.8" cy="10.3" rx="3.4" ry="4.2"/><path d="M129.5,18.5 C129.7,15.5 131,14 135.8,13.3 C140.6,14 141.9,15.5 142.3,18.5 Z"/></g>
<g fill="#4d4d4d"><ellipse cx="135.8" cy="10.3" rx="2.4" ry="3.3"/><path d="M130.8,17.9 C131,15.5 132,14.3 135.8,13.5 C139.6,14.3 140.6,15.5 140.8,17.9 Z"/></g>
<g fill="#4d4d4d"><ellipse cx="177.9" cy="9.8" rx="2.4" ry="3.3"/><path d="M172.8,17.9 C173,15.5 174,14 177.9,13.2 C181.8,14 182.8,15.5 183,17.9 Z"/></g>
</svg>
<div class="t" style="left:210.3px;top:904px;font-size:11.3px;line-height:15px;color:#9a9a9a;letter-spacing:0.074px">Here is your Smart Chat ( Ctrl + Space )</div>
<div class="a" style="left:1268px;top:903px;width:114px;height:17px;background:#fad3a3"></div>
<div class="t" style="left:1274.3px;top:903px;font-size:11.8px;line-height:15px;color:#6b5d4e;letter-spacing:-0.021px">Visitors Online</div>
<svg class="a" style="left:1354px;top:903px" width="23" height="17"><ellipse cx="11.3" cy="8.3" rx="10.3" ry="7.5" fill="#e8635e"/><text x="11.3" y="12.6" font-family="Liberation Sans" font-weight="bold" font-size="11.5" fill="#fff" text-anchor="middle">1</text></svg>
<div class="a" style="left:1382px;top:898px;width:1px;height:27px;background:#d8d8d8"></div>
<div class="t" style="left:1393px;top:902px;font-size:11.7px;line-height:15px;color:#2e7bb8;letter-spacing:-0.073px;text-decoration:underline">Transition Guide</div>
<div class="a" style="left:1490px;top:898px;width:1px;height:27px;background:#dadada"></div>
<div class="a" style="left:1520px;top:898px;width:1px;height:27px;background:#dadada"></div>
<div class="a" style="left:1550px;top:898px;width:1px;height:27px;background:#dadada"></div>
<svg class="a" style="left:1495px;top:901px" width="20" height="19"><g fill="none" stroke="#444" stroke-width="1.2"><circle cx="10" cy="10.5" r="6.3"/><path d="M10,7 L10,10.8 L12.8,10.8"/><path d="M2.5,5 A3.5,3.5 0 0 1 6,2"/><path d="M14,2 A3.5,3.5 0 0 1 17.5,5"/><line x1="5.5" y1="15.5" x2="4" y2="17.5"/><line x1="14.5" y1="15.5" x2="16" y2="17.5"/></g></svg>
<svg class="a" style="left:1526px;top:902px" width="18" height="18"><path d="M3.5,1.5 L6,5.5 L4.5,7.5 C5.5,10 8,12.5 10.5,13.5 L12.5,12 L16.5,14.5 C16,16.5 14.5,17 13,16.8 C7.5,16 2,10.5 1.2,5 C1,3.5 1.8,2 3.5,1.5 Z" fill="none" stroke="#e36a6a" stroke-width="1" stroke-linejoin="round"/></svg>
<svg class="a" style="left:1555px;top:898px" width="24" height="23"><g fill="none" stroke="#444" stroke-width="1.2"><circle cx="10" cy="13.8" r="7.8"/><path d="M10,10 L10,14 L12.5,16"/></g><circle cx="16.5" cy="6" r="4.8" fill="#e3131b"/></svg>
<div class="a" style="left:1581px;top:898px;width:99px;height:27px;background:#4a8ee0"></div>
<svg class="a" style="left:1586px;top:903px" width="21" height="17"><path d="M1.5,1.5 L19.5,1.5 L19.5,13.5 L6,13.5 L2.5,16 L2.5,13.5 L1.5,13.5 Z M1.5,1.5 L10.5,9 L19.5,1.5" fill="none" stroke="#fff" stroke-width="1.2" stroke-linejoin="round"/></svg>
<div class="t" style="left:1611px;top:903px;font-size:11px;line-height:14px;color:#ffffff;font-weight:bold;letter-spacing:-0.386px">FEEDBACK</div>
</div>
</body></html>
